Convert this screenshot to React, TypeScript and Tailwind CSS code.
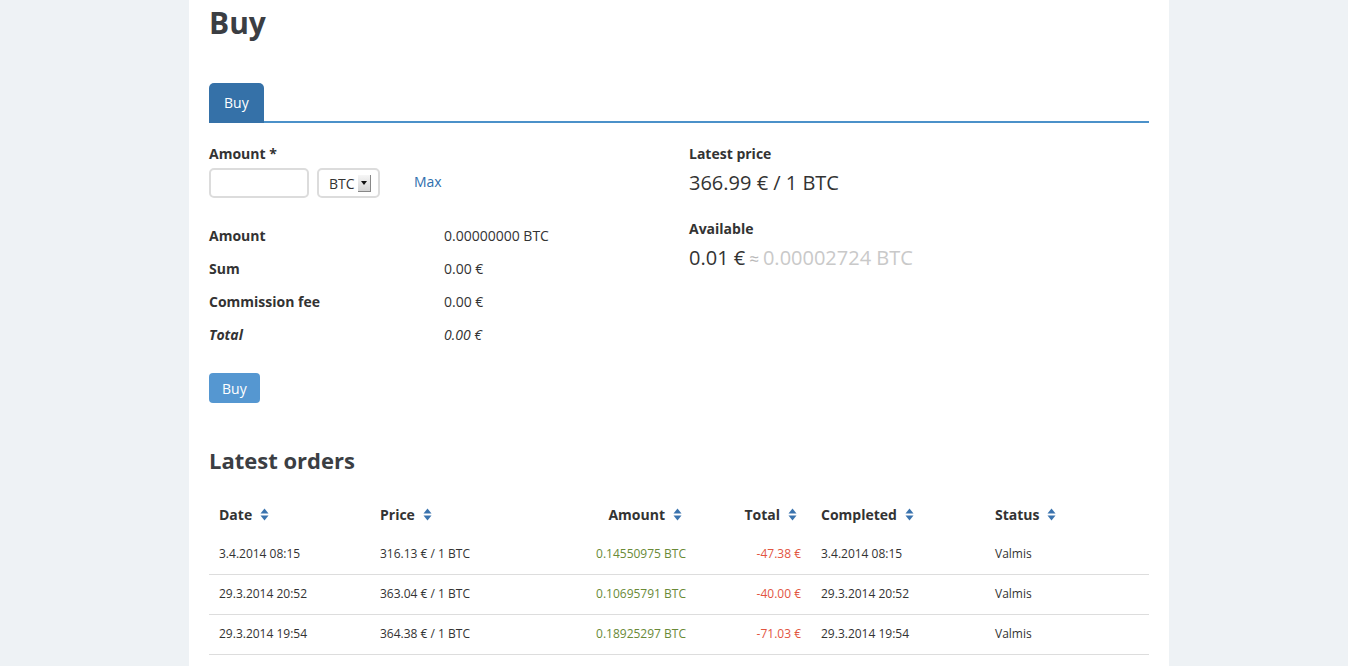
import React from 'react';

const orders = [
  { date: '3.4.2014 08:15', price: '316.13 € / 1 BTC', amount: '0.14550975 BTC', total: '-47.38 €', completed: '3.4.2014 08:15', status: 'Valmis' },
  { date: '29.3.2014 20:52', price: '363.04 € / 1 BTC', amount: '0.10695791 BTC', total: '-40.00 €', completed: '29.3.2014 20:52', status: 'Valmis' },
  { date: '29.3.2014 19:54', price: '364.38 € / 1 BTC', amount: '0.18925297 BTC', total: '-71.03 €', completed: '29.3.2014 19:54', status: 'Valmis' },
];

// up/down sort arrows, with a little trailing room like the original sprite
function SortIcon() {
  return (
    <svg className="inline-block w-[13px] h-[13px] ml-[8px] align-[-1px]" viewBox="0 0 13 13">
      <path d="M4.5 0.5 L8.5 5.5 L0.5 5.5 Z" fill="#3a73ae" />
      <path d="M4.5 12.5 L8.5 7.5 L0.5 7.5 Z" fill="#3a73ae" />
    </svg>
  );
}

function SummaryRow({ label, value, italic }: { label: string; value: string; italic?: boolean }) {
  return (
    <div className={`flex items-center h-[33px] text-[14px] ${italic ? 'italic' : ''}`}>
      <div className="w-[235px] font-bold text-[#333]">{label}</div>
      <div className="text-[#333]">{value}</div>
    </div>
  );
}

export default function App() {
  return (
    <div className="min-h-screen bg-[#eef2f5] font-['Open_Sans','Liberation_Sans',sans-serif] text-[#333]">
      <div className="w-[980px] min-h-screen ml-[189px] bg-white px-[20px] pb-[20px]">
        <h1 className="pt-[5px] text-[30px] leading-[36px] font-bold text-[#3b3e43]">Buy</h1>

        {/* tabs */}
        <div className="mt-[42px] flex border-b-2 border-[#4b91c9]">
          <div className="h-[40px] -mb-[2px] px-[15px] pb-[2px] flex items-center rounded-t-[5px] bg-[#3571a8] text-white text-[14px]">
            Buy
          </div>
        </div>

        <div className="flex gap-[20px] mt-[21px]">
          {/* left column */}
          <div className="w-[460px]">
            <div className="text-[14px] leading-[20px] font-bold">Amount *</div>
            <div className="flex items-center mt-[4px]">
              <input
                type="text"
                className="w-[100px] h-[30px] border-2 border-[#dcdcdc] rounded-[5px] outline-none px-2 text-[14px]"
              />
              <div className="ml-[8px] w-[63px] h-[30px] border-2 border-[#dcdcdc] rounded-[5px] flex items-center pl-[10px] text-[14px]">
                <span>BTC</span>
                <span className="ml-[3px] w-[13px] h-[17px] flex items-center justify-center bg-gradient-to-b from-[#f6f6f6] to-[#d4d4d4] border-r border-b border-[#888]">
                  <svg className="w-[6px] h-[4px]" viewBox="0 0 6 4">
                    <path d="M0 0 L6 0 L3 4 Z" fill="#111" />
                  </svg>
                </span>
              </div>
              <a className="ml-[34px] -mt-[3px] text-[14px] text-[#2f6fad] cursor-pointer">Max</a>
            </div>

            <div className="mt-[21px]">
              <SummaryRow label="Amount" value="0.00000000 BTC" />
              <SummaryRow label="Sum" value="0.00 €" />
              <SummaryRow label="Commission fee" value="0.00 €" />
              <SummaryRow label="Total" value="0.00 €" italic />
            </div>

            <button className="mt-[22px] h-[30px] px-[13px] rounded-[4px] bg-[#5597d1] text-white text-[14px]">
              Buy
            </button>
          </div>

          {/* right column */}
          <div className="w-[460px]">
            <div className="text-[14px] leading-[20px] font-bold">Latest price</div>
            <div className="mt-[5px] text-[20px] leading-[28px] text-[#333]">366.99 € / 1 BTC</div>
            <div className="mt-[22px] text-[14px] leading-[20px] font-bold">Available</div>
            <div className="mt-[5px] text-[20px] leading-[28px]">
              <span className="text-[#333]">0.01 €</span>
              <span className="text-[17px] text-[#b8b8b8] ml-[4px] mr-[4px]">≈</span>
              <span className="text-[#c9c9c9]">0.00002724 BTC</span>
            </div>
          </div>
        </div>

        <h2 className="mt-[42px] text-[22px] leading-[30px] font-bold text-[#3b3e43]">Latest orders</h2>

        <table className="mt-[19px] w-[940px] table-fixed border-collapse">
          <colgroup>
            <col className="w-[161px]" />
            <col className="w-[190px]" />
            <col className="w-[136px]" />
            <col className="w-[115px]" />
            <col className="w-[174px]" />
            <col className="w-[164px]" />
          </colgroup>
          <thead>
            <tr className="h-[40px] text-[14px] font-bold">
              <th className="px-[10px] text-left">Date<SortIcon /></th>
              <th className="px-[10px] text-left">Price<SortIcon /></th>
              <th className="px-[10px] text-right">Amount<SortIcon /></th>
              <th className="px-[10px] text-right">Total<SortIcon /></th>
              <th className="px-[10px] text-left">Completed<SortIcon /></th>
              <th className="px-[10px] text-left">Status<SortIcon /></th>
            </tr>
          </thead>
          <tbody>
            {orders.map((o, i) => (
              <tr key={i} className="h-[40px] text-[12px] border-b border-[#dddddd]">
                <td className="px-[10px]">{o.date}</td>
                <td className="px-[10px]">{o.price}</td>
                <td className="px-[10px] text-right text-[#6a8a37]">{o.amount}</td>
                <td className="px-[10px] text-right text-[#e2553f]">{o.total}</td>
                <td className="px-[10px]">{o.completed}</td>
                <td className="px-[10px]">{o.status}</td>
              </tr>
            ))}
          </tbody>
        </table>
      </div>
    </div>
  );
}
